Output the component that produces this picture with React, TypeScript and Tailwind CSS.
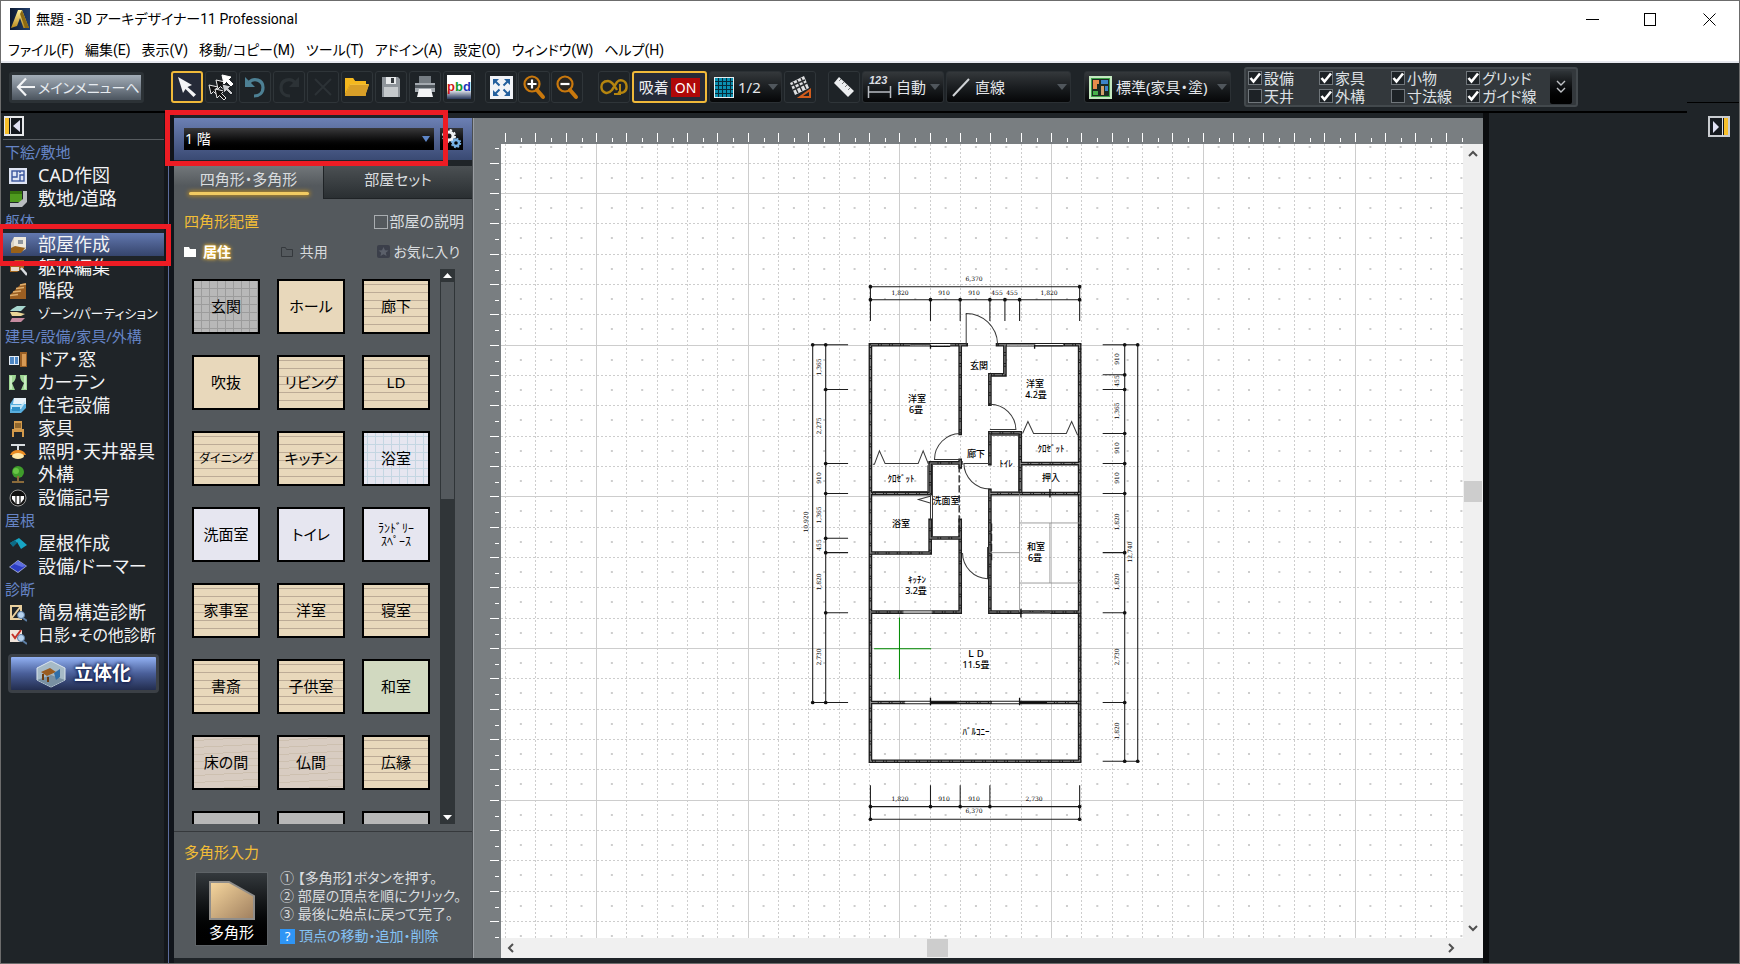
import React from "react";
import type { ReactNode } from "react";

const JP = "font-['Noto_Sans','Noto_Sans_CJK_JP',sans-serif] [font-feature-settings:'palt']";

/* ---------- title bar and menu ---------- */

const MENUS = ["ファイル(F)", "編集(E)", "表示(V)", "移動/コピー(M)", "ツール(T)", "アドイン(A)", "設定(O)", "ウィンドウ(W)", "ヘルプ(H)"];

function TitleBar() {
  return (
    <header className="border-b-2 border-[#e6e8ee] bg-white font-['Roboto','Noto_Sans_CJK_JP',sans-serif] text-black">
      <div className="flex h-9 items-center pl-[9px]">
        <svg width="20" height="22" viewBox="0 0 20 22" aria-hidden="true">
          <defs>
            <linearGradient id="logoBg" x1="0" x2="1"><stop offset="0" stopColor="#0c1a30" /><stop offset="1" stopColor="#23406e" /></linearGradient>
            <linearGradient id="logoA" x1="0" x2="0" y1="0" y2="1"><stop offset="0" stopColor="#fff3a0" /><stop offset="1" stopColor="#b98a1c" /></linearGradient>
          </defs>
          <rect width="20" height="22" fill="url(#logoBg)" />
          <path d="M1 20 L8 2 H12 L19 20 H13.5 L10 10 L7 18 Z" fill="url(#logoA)" />
          <path d="M12 2 L19 20 H15 L10 6 Z" fill="#8d6a12" />
        </svg>
        <h1 className="ml-1.5 flex-1 whitespace-nowrap text-[14px]">無題 - 3D アーキデザイナー11 Professional</h1>
        <div className="flex">
          <button aria-label="最小化" className="grid h-9 w-[58px] place-items-center"><svg width="13" height="13" viewBox="0 0 13 13"><path d="M0 6.5H13" stroke="#000" /></svg></button>
          <button aria-label="最大化" className="grid h-9 w-[58px] place-items-center"><svg width="13" height="13" viewBox="0 0 13 13"><rect x=".5" y=".5" width="11" height="12" fill="none" stroke="#000" /></svg></button>
          <button aria-label="閉じる" className="grid h-9 w-[60px] place-items-center"><svg width="13" height="13" viewBox="0 0 13 13"><path d="M.5 .5 12.5 12.5M12.5 .5 .5 12.5" stroke="#000" /></svg></button>
        </div>
      </div>
      <nav className="flex h-6 items-center gap-[11px] pl-[7px] pt-0.5">
        {MENUS.map((m) => (
          <button key={m} className="whitespace-nowrap text-[14px] leading-[22px]">{m}</button>
        ))}
      </nav>
    </header>
  );
}

/* ---------- toolbar ---------- */

function Tool({ label, active, children }: { label: string; active?: boolean; children: ReactNode }) {
  return (
    <button
      aria-label={label}
      className={
        "grid h-8 w-8 shrink-0 place-items-center rounded-[3px] " +
        (active ? "border-2 border-[#f0b93a] bg-[#252a38]" : "border border-[#2f3539] bg-[#1e2327]")
      }
    >
      {children}
    </button>
  );
}

function Drop({ label, value, className, icon }: { label: string; value: string; className: string; icon: ReactNode }) {
  return (
    <label className={"relative flex h-8 shrink-0 items-center gap-1 rounded-[3px] border border-[#2b3034] bg-gradient-to-b from-[#34383b] via-[#1b1e21] to-[#060708] pl-1 text-[#e4e6ea] " + className}>
      {icon}
      <select aria-label={label} className="min-w-0 flex-1 appearance-none bg-transparent text-[15px] leading-6 outline-none">
        <option>{value}</option>
      </select>
      <svg className="pointer-events-none absolute right-[3px]" width="10" height="6" viewBox="0 0 10 6"><path d="M0 0H10L5 6Z" fill="#50565c" /></svg>
    </label>
  );
}

function Cursor() {
  return <svg width="22" height="22" viewBox="0 0 22 22"><path d="M2 1 L16 9 L11.5 11 L20 18.5 L17.5 21 L9.500 13 L7 17Z" fill="#f4f4f6" /></svg>;
}

function Multi() {
  const d = "M0 0 L9 2 L6.500 4.500 L11 9 L9 11 L4.500 6.500 L2 9Z";
  return (
    <svg width="28" height="28" viewBox="0 0 28 28">
      <path transform="translate(2 12)" d={d} fill="#111" stroke="#e8e8e8" />
      <path transform="translate(8 16)" d={d} fill="#111" stroke="#e8e8e8" />
      <path transform="translate(9 7)" d={d} fill="#111" stroke="#e8e8e8" />
      <path transform="translate(15 11)" d={d} fill="#c9cbce" stroke="#15191c" />
      <path transform="translate(15 2)" d={d} fill="#fff" stroke="#fff" />
    </svg>
  );
}

function Turn({ color, flip }: { color: string; flip?: boolean }) {
  return (
    <svg width="24" height="24" viewBox="0 0 24 24" className={flip ? "-scale-x-100" : ""}>
      <path d="M6 7.500 C11 2 20 5 20 12.500 C20 18 16 21 11 21" fill="none" stroke={color} strokeWidth="3.200" />
      <path d="M2 2 V12 H12Z" fill={color} />
    </svg>
  );
}

function Magnify({ plus }: { plus?: boolean }) {
  return (
    <svg width="24" height="26" viewBox="0 0 24 26">
      <circle cx="10" cy="10" r="7.500" fill="#2a2620" stroke="#c9780d" strokeWidth="2.200" />
      <path d="M15 16 L21 23" stroke="#c9780d" strokeWidth="4" strokeLinecap="round" />
      <path d={plus ? "M5.500 10H14.500M10 5.500V14.500" : "M5.500 10H14.500"} stroke="#fff" strokeWidth="2.200" />
    </svg>
  );
}

function GridIcon() {
  return (
    <svg width="20" height="21" viewBox="0 0 20 21">
      <rect x=".5" y=".5" width="19" height="20" fill="#0a90b0" stroke="#e8eef0" />
      <path d="M4.500 1V20M8.500 1V20M12.500 1V20M16.500 1V20M1 4.500H19M1 8.500H19M1 12.500H19M1 16.500H19" stroke="#062b3a" />
    </svg>
  );
}

const LAYERS: [string, boolean, string, boolean, string][] = [
  ["設備", true, "天井", false, "w-[71px]"],
  ["家具", true, "外構", true, "w-[72px]"],
  ["小物", true, "寸法線", false, "w-[75px]"],
  ["グリッド", true, "ガイド線", true, "w-[84px]"],
];

function Check({ text, on }: { text: string; on: boolean }) {
  return (
    <label className="relative flex h-[18px] items-center gap-0.5 text-[#dfe1e4]">
      <input type="checkbox" defaultChecked={on} className="peer h-[14px] w-[14px] appearance-none border border-[#70767b] bg-[#1d2226]" />
      <svg className="pointer-events-none absolute left-0 hidden peer-checked:block" width="14" height="14" viewBox="0 0 14 14"><path d="M2.500 7 5.500 10.500 12 2.500" fill="none" stroke="#fff" strokeWidth="2.600" /></svg>
      <span className="whitespace-nowrap text-[15px] leading-[18px]">{text}</span>
    </label>
  );
}

function Toolbar() {
  return (
    <div className="flex bg-[#1f2428]">
      <div className="flex h-[50px] min-w-0 flex-1 items-center overflow-hidden border-b-2 border-black pl-2">
        <button className="flex h-[31px] w-[135px] shrink-0 items-center gap-0.5 rounded-[3px] border-[3px] border-[#2c3236] bg-gradient-to-b from-[#a3adb7] via-[#77818c] to-[#4b545e] pl-1 text-[#e6ebf0]">
          <svg width="20" height="20" viewBox="0 0 20 20"><path d="M10 1.500 2 10 10 18.500M2 10H19" fill="none" stroke="#f2f4f6" strokeWidth="2.200" /></svg>
          <span className="whitespace-nowrap text-[14px]">メインメニューへ</span>
        </button>
        <div className="ml-[27px] flex gap-0.5">
          <Tool label="選択" active><Cursor /></Tool>
          <Tool label="複数選択"><Multi /></Tool>
          <Tool label="元に戻す"><Turn color="#4d8094" /></Tool>
          <Tool label="やり直し"><Turn color="#2c3236" flip /></Tool>
          <Tool label="削除"><svg width="20" height="20" viewBox="0 0 20 20"><path d="M2 2 18 18M18 2 2 18" stroke="#2c3236" strokeWidth="2" /></svg></Tool>
          <Tool label="開く">
            <svg width="26" height="22" viewBox="0 0 26 22"><path d="M1 2H9L11 5H22V20H1Z" fill="#c78d12" /><path d="M1 20 6 8H25L21 20Z" fill="#f2bd35" /><path d="M1 2H9L11 5H22V8H6L1 18Z" fill="#f5b81e" /><path d="M1 20 6 9H25L21 20Z" fill="#d99f28" /></svg>
          </Tool>
          <Tool label="保存">
            <svg width="20" height="22" viewBox="0 0 20 22"><path d="M1 1H17L19 3V21H1Z" fill="#8e949a" /><rect x="5" y="1" width="10" height="7" fill="#e7e9eb" /><rect x="10" y="2" width="3" height="5" fill="#33383c" /><rect x="3" y="11" width="14" height="10" fill="#c5c9cc" /></svg>
          </Tool>
          <Tool label="印刷">
            <svg width="24" height="24" viewBox="0 0 24 24"><rect x="6" y="1" width="12" height="7" fill="#757c82" /><path d="M2 8H22V17H2Z" fill="#a4aab0" /><path d="M2 10H22V13H2Z" fill="#52595f" /><path d="M6 14H18L20 22H4Z" fill="#f3f4f5" /></svg>
          </Tool>
          <Tool label="pbd">
            <span className="flex h-6 w-6 items-center justify-center bg-gradient-to-b from-white from-60% to-[#2c3a5c] font-['Liberation_Sans',sans-serif] text-[13px] font-bold leading-6">
              <span className="text-[#d01818]">p</span><span className="text-[#129a2c]">b</span><span className="text-[#1c35b8]">d</span>
            </span>
          </Tool>
        </div>
        <div className="ml-2.5 flex gap-px">
          <Tool label="全体表示">
            <svg width="23" height="23" viewBox="0 0 23 23"><rect width="23" height="23" fill="#f1f3f7" /><path d="M3 3H9L3 9ZM20 3V9L14 3ZM3 20V14L9 20ZM20 20H14L20 14Z" fill="#24609e" /><path d="M5 5 9.500 9.500M18 5 13.500 9.500M5 18 9.500 13.500M18 18 13.500 13.500" stroke="#24609e" strokeWidth="2" /></svg>
          </Tool>
          <Tool label="拡大"><Magnify plus /></Tool>
          <Tool label="縮小"><Magnify /></Tool>
        </div>
        <div className="ml-[15px] flex gap-0.5">
          <Tool label="連続">
            <svg width="28" height="18" viewBox="0 0 28 18"><path d="M8 3C3 3 1 6 1.500 10C2 15 8 17 12 12L17 4C20 1 26 2 26.500 8C27 14 22 16 18 14M8 3C12 3 14 7 17 12" fill="none" stroke="#b5850f" strokeWidth="2.400" /><path d="M20 6V16H14" fill="none" stroke="#b5850f" strokeWidth="2" /></svg>
          </Tool>
          <button className="flex h-8 w-[75px] shrink-0 items-center justify-center gap-0.5 whitespace-nowrap rounded-[3px] border-2 border-[#f0b93a] bg-[#252a38] text-[15px] text-[#edeff3]">
            吸着<span className="bg-[#b00808] px-1 text-[14px] leading-[19px] text-white">ON</span>
          </button>
          <Drop label="グリッド分割" value="1/2" className="w-[73px]" icon={<GridIcon />} />
          <Tool label="グリッド設定">
            <svg width="24" height="24" viewBox="0 0 24 24"><path d="M2 8 16 1 21 13 7 20Z" fill="#dfe0e2" /><path d="M5 7 10 18M9 5 14 16M13 3 18 14M3 11 17 5M5 15 19 8" stroke="#2a2d30" strokeWidth="1.400" /><path d="M12 22H22V15Z" fill="none" stroke="#d25c1c" strokeWidth="2" /></svg>
          </Tool>
        </div>
        <div className="ml-3 flex gap-0.5">
          <Tool label="定規">
            <svg width="24" height="24" viewBox="0 0 24 24"><path d="M7 2 22 16 16 22 2 8Z" fill="#eceef0" /><path d="M9 4 7 6M12 7 10 9M15 10 13 12M18 13 16 15" stroke="#777" /></svg>
          </Tool>
          <Drop label="寸法" value="自動" className="w-[82px]" icon={
            <svg width="25" height="24" viewBox="0 0 25 24"><text x="2" y="9" fill="#dcdee2" className="font-['Liberation_Sans',sans-serif] text-[11px] font-bold italic">123</text><path d="M1.500 11V23M23.500 11V23M2 17H23" stroke="#b8bcc2" strokeWidth="1.500" /></svg>
          } />
          <Drop label="線種" value="直線" className="w-[125px]" icon={<svg width="20" height="22" viewBox="0 0 20 22"><path d="M2 20 18 3" stroke="#d0d3d6" strokeWidth="2" /></svg>} />
        </div>
        <div className="ml-[13px] flex">
          <Drop label="表示テンプレート" value="標準(家具・塗)" className="w-[147px]" icon={
            <svg className="shrink-0" width="23" height="23" viewBox="0 0 23 23"><rect x="1" y="1" width="21" height="21" fill="#1b2a22" stroke="#c4e8c0" strokeWidth="2" /><rect x="2.500" y="2.500" width="18" height="18" fill="none" stroke="#3da347" /><path d="M4 4H10V8H8V13H4Z" fill="#e58c4b" /><rect x="12" y="4" width="7" height="4" fill="#3c84c8" /><rect x="4" y="15" width="5" height="4" fill="#46b04a" /><rect x="12" y="10" width="3" height="9" fill="#cfa06a" /><rect x="16" y="10" width="3" height="5" fill="#3c84c8" /></svg>
          } />
        </div>
        <div className="ml-[13px] flex h-10 shrink-0 items-center rounded-[3px] border-2 border-[#43494d] bg-[#33383c] pl-0.5 pr-1">
          {LAYERS.map(([a, ao, b, bo, w]) => (
            <div key={a} className={w}><Check text={a} on={ao} /><Check text={b} on={bo} /></div>
          ))}
          <button aria-label="その他の表示" className="grid h-[33px] w-[22px] place-items-center rounded-[2px] bg-gradient-to-b from-[#2f3438] to-black">
            <svg width="10" height="14" viewBox="0 0 10 14"><path d="M1 1 5 5 9 1M1 8 5 12 9 8" fill="none" stroke="#c0c3c7" strokeWidth="1.400" /></svg>
          </button>
        </div>
      </div>
      <div className="h-10 w-[52px] shrink-0 border-b border-black" />
    </div>
  );
}

/* ---------- left navigation ---------- */

const ICONS: Record<string, ReactNode> = {
  cad: <><rect width="18" height="16" y="1" fill="#dfe5f4" /><rect x="3" y="4" width="12" height="10" fill="none" stroke="#3a569c" strokeWidth="1.400" /><path d="M8 4V10H3M11 14V8H15M11 4V6" fill="none" stroke="#3a569c" strokeWidth="1.400" /></>,
  site: <><path d="M1 1H13V12H1Z" fill="#4f9a1e" /><path d="M14 1H18V12L13 17H1V13H9L14 9Z" fill="#b9bcc0" /><path d="M1 1H13V4H1Z" fill="#35720f" /></>,
  room: <><path d="M5 1H17V13L12 16H2V7Z" fill="#d9d2c4" /><path d="M5 1H17V11H5Z" fill="#ede8dd" /><rect x="9" y="4" width="5" height="4" fill="#8e959e" /><path d="M2 12 6 10 16 12 12 17H2Z" fill="#9a6118" /></>,
  edit: <><path d="M1 6 6 1H15V9L8 13H1Z" fill="#a3661f" /><path d="M2 8H10V12H2Z" fill="#e7dccb" /><path d="M12 9 18 16" stroke="#d9dce0" strokeWidth="2.500" /></>,
  stairs: <><path d="M1 17V13L4 10 8 6 12 2 17 1V17Z" fill="#9c5f22" /><path d="M1 13.500 9 12.500M4 10 12 9M7 6.500 15 5.500M11 3 17 2" stroke="#e0b070" strokeWidth="1.500" /></>,
  zone: <><path d="M3 4 8 1H17L12 6H1Z" fill="#a7d7cf" /><path d="M1 7 8 7 16 9 12 11H3Z" fill="#e9d597" /><path d="M3 13H16L12 17H1Z" fill="#c78ba0" /></>,
  door: <><rect y="5" width="10" height="9" fill="#e3ecf5" /><path d="M1 6H5V13H1ZM6 6H9V13H6Z" fill="#4e87c4" /><rect x="11" y="1" width="7" height="15" fill="#9a5f24" /><rect x="13" y="3" width="4" height="12" fill="#d79a55" /></>,
  curtain: <><path d="M0 1H7Q7 7 3 9L6 16H0ZM18 1H11Q11 7 15 9L12 16H18Z" fill="#9fd694" /><path d="M2 2V15M16 2V15" stroke="#d8f3cf" strokeWidth="1.500" /></>,
  bath: <><path d="M5 1H17V11L12 16H1V7Z" fill="#58aede" /><path d="M5 1H17V7H4Z" fill="#e8f2f9" /><path d="M2 8H12L16 4V6L12 12H2Z" fill="#bfe3f5" /><path d="M3 10H11V14H3Z" fill="#2f90c8" /></>,
  chair: <><path d="M5 1H13V9H5ZM3 9H15V12H3ZM3 12H5V17H3ZM13 12H15V17H13Z" fill="#d39a4b" /><path d="M7 3V8M9 3V8M11 3V8" stroke="#4d3413" /></>,
  lamp: <><path d="M2 1H16V3H2ZM8 3H10V7H8Z" fill="#d8dde0" /><path d="M1 12Q3 7 9 7T17 12Z" fill="#e98c23" /><ellipse cx="9" cy="13" rx="6" ry="3" fill="#ffe9a6" /></>,
  tree: <><circle cx="9" cy="6" r="6" fill="#3f9c2b" /><circle cx="7" cy="5" r="3" fill="#68c646" /><path d="M8 10H10V15H15V17H3V15H8Z" fill="#8b6b3b" /></>,
  symbol: <><circle cx="9" cy="9" r="8" fill="#111" stroke="#9a9a9a" /><path d="M3 7H15V10L11 15H7L3 10Z" fill="#fff" /><path d="M7 7V15M11 7V15" stroke="#111" strokeWidth="1.200" /></>,
  roof: <><path d="M1 8 10 3 18 10 12 14 8 7 4 11Z" fill="#17a5c4" /><path d="M1 8 6 5 8 8 4 12Z" fill="#0c6b86" /></>,
  dormer: <><path d="M9 2 18 8 9 15 0 9Z" fill="#a9b2dc" /><path d="M9 3 17 8 9 14 1 9Z" fill="#2c3ec4" /><path d="M9 3 17 8 13 9 5 6Z" fill="#5f6fe0" /></>,
  frame: <><path d="M2 2H12V15H2ZM12 2 2 15" fill="none" stroke="#e9cf9d" strokeWidth="2" /><circle cx="12" cy="11" r="3.500" fill="#b7d3ee" stroke="#5c7ea5" /><path d="M14 14 18 17" stroke="#5c7ea5" strokeWidth="2" /></>,
  shadow: <><rect x="1" y="3" width="12" height="12" fill="#f0e4da" /><path d="M3 7 6 11 12 3" fill="none" stroke="#c33127" strokeWidth="2" /><circle cx="12" cy="11" r="3.500" fill="#b7d3ee" stroke="#5c7ea5" /><path d="M14 14 18 17" stroke="#5c7ea5" strokeWidth="2" /></>,
};

const NAV: { text: string; icon?: string; size?: string }[] = [
  { text: "下絵/敷地" },
  { text: "CAD作図", icon: "cad" },
  { text: "敷地/道路", icon: "site" },
  { text: "躯体" },
  { text: "部屋作成", icon: "room" },
  { text: "躯体編集", icon: "edit" },
  { text: "階段", icon: "stairs" },
  { text: "ゾーン/パーティション", icon: "zone", size: "text-[13px]" },
  { text: "建具/設備/家具/外構" },
  { text: "ドア・窓", icon: "door" },
  { text: "カーテン", icon: "curtain" },
  { text: "住宅設備", icon: "bath" },
  { text: "家具", icon: "chair" },
  { text: "照明・天井器具", icon: "lamp" },
  { text: "外構", icon: "tree" },
  { text: "設備記号", icon: "symbol" },
  { text: "屋根" },
  { text: "屋根作成", icon: "roof" },
  { text: "設備/ドーマー", icon: "dormer" },
  { text: "診断" },
  { text: "簡易構造診断", icon: "frame" },
  { text: "日影・その他診断", icon: "shadow", size: "text-[16px]" },
];

function Sidebar() {
  return (
    <aside className="w-[163px] shrink-0 pl-0.5">
      <div className="flex h-[27px] items-center border-b border-[#565b5f] pl-px">
        <button aria-label="メニューを閉じる">
          <svg width="20" height="20" viewBox="0 0 20 20"><rect x="1" y="1" width="18" height="18" fill="#15191e" stroke="#e6e8ea" strokeWidth="2" /><rect x="1" y="2" width="4" height="16" fill="#f8bf2a" /><path d="M16 4V16L9 10Z" fill="#dfe0f2" /><path d="M6.500 1V19" stroke="#dfe0e4" /></svg>
        </button>
      </div>
      <ul className="pt-px">
        {NAV.map((n) =>
          n.icon ? (
            <li key={n.text} className="relative">
              <a
                href="#"
                className={
                  "flex h-[23px] items-center gap-[11px] whitespace-nowrap pl-1.5 leading-[23px] text-[#f2f3f5] " +
                  (n.size ?? "text-[18px]") +
                  (n.text === "部屋作成" ? " bg-gradient-to-b from-[#6278b0] to-[#36456c]" : "")
                }
              >
                <svg className="shrink-0" width="18" height="18" viewBox="0 0 18 18" aria-hidden="true">{ICONS[n.icon]}</svg>
                {n.text}
              </a>
              {n.text === "部屋作成" && <span className="pointer-events-none absolute -left-[3px] -top-[9px] z-20 h-[42px] w-[171px] border-[5px] border-l-[3px] border-[#ed1c24]" />}
            </li>
          ) : (
            <li key={n.text} className="h-[23px] whitespace-nowrap pl-0.5 text-[15px] leading-[23px] text-[#6684c6]">{n.text}</li>
          ),
        )}
      </ul>
      <button className="ml-[5px] mt-[7px] flex h-[39px] w-[151px] items-center justify-center gap-2 rounded-[4px] border-[3px] border-[#3b4046] bg-gradient-to-b from-[#93b2f4] via-[#4a5f99] to-[#232e50] text-[19px] font-bold text-white [text-shadow:0_0_4px_#0a1440,0_0_3px_#0a1440]">
        <svg width="30" height="28" viewBox="0 0 30 28"><path d="M15 1 29 8V20L15 27 1 20V8Z" fill="#a6bac6" stroke="#dce6ee" /><path d="M1 20 15 15 29 20 15 27Z" fill="#7990a2" /><path d="M5 12 14 8 20 12 11 16Z" fill="#9a5c20" /><path d="M7 14V20M12 17V22" stroke="#6d3c10" strokeWidth="2" /><path d="M18 13 24 9V17L20 20Z" fill="#2f6ea8" /></svg>
        立体化
      </button>
    </aside>
  );
}

/* ---------- room panel ---------- */

type Tex = "tile" | "plain" | "wood" | "bath" | "white" | "tatami" | "grain";

const TEX: Record<Tex, string> = {
  tile: "bg-[#b8b8b8] [background-image:repeating-linear-gradient(90deg,transparent_0_7px,#9c9c9c_7px_8px),repeating-linear-gradient(transparent_0_7px,#9c9c9c_7px_8px)]",
  plain: "bg-[#e8d8bb]",
  wood: "bg-[#e8d8bb] [background-image:repeating-linear-gradient(transparent_0_3px,#bcab96_3px_4px,transparent_4px_8px)]",
  bath: "bg-[#e6e6f0] [background-image:repeating-linear-gradient(90deg,transparent_0_3px,#c4d6e2_3px_4px,transparent_4px_8px),repeating-linear-gradient(transparent_0_3px,#c4d6e2_3px_4px,transparent_4px_8px)]",
  white: "bg-[#e6e6f0]",
  tatami: "bg-[#d1d9c0]",
  grain: "bg-[#d8ccc1] [background-image:repeating-linear-gradient(177deg,transparent_0_3px,#cdc0b0_3px_4px,transparent_4px_7px)]",
};

const ROOMS: [string, Tex][] = [
  ["玄関", "tile"], ["ホール", "plain"], ["廊下", "wood"],
  ["吹抜", "plain"], ["リビング", "wood"], ["LD", "wood"],
  ["ダイニング", "wood"], ["キッチン", "wood"], ["浴室", "bath"],
  ["洗面室", "white"], ["トイレ", "white"], ["ﾗﾝﾄﾞﾘｰ\nｽﾍﾟｰｽ", "white"],
  ["家事室", "wood"], ["洋室", "wood"], ["寝室", "wood"],
  ["書斎", "wood"], ["子供室", "wood"], ["和室", "tatami"],
  ["床の間", "grain"], ["仏間", "grain"], ["広縁", "wood"],
];

function RoomPanel() {
  return (
    <section className="flex w-[298px] shrink-0 flex-col bg-[#54595d] text-[15px] text-[#d9dcdf]">
      <div className="relative flex h-[42px] items-center gap-1.5 bg-gradient-to-b from-[#6c80b4] to-[#3a4a73] pl-2.5">
        <label className="relative flex h-[22px] w-[250px] items-center bg-gradient-to-b from-[#3a3a3c] to-black">
          <select aria-label="階" className="w-full appearance-none bg-transparent px-px text-[14px] leading-[22px] text-white outline-none"><option>1 階</option></select>
          <svg className="pointer-events-none absolute right-1" width="8" height="6" viewBox="0 0 8 6"><path d="M0 0H8L4 6Z" fill="#5e86c8" /></svg>
        </label>
        <button aria-label="階の設定" className="grid h-[22px] w-[23px] place-items-center bg-gradient-to-b from-[#34363a] to-black">
          <svg width="20" height="20" viewBox="0 0 20 20"><circle cx="7" cy="7" r="4" fill="none" stroke="#f0f2f4" strokeWidth="3" /><circle cx="7" cy="7" r="6" fill="none" stroke="#f0f2f4" strokeWidth="2" strokeDasharray="2.400 2.310" /><circle cx="14" cy="14" r="3" fill="none" stroke="#76b0e4" strokeWidth="2.400" /><circle cx="14" cy="14" r="4.500" fill="none" stroke="#76b0e4" strokeWidth="1.500" strokeDasharray="1.800 1.730" /></svg>
        </button>
        <span className="pointer-events-none absolute -left-[9px] -top-2 z-20 h-14 w-[283px] border-[5px] border-[#ed1c24]" />
      </div>
      <div role="tablist" className="grid h-[39px] grid-cols-2 border-t-[6px] border-[#1f2428]">
        <button role="tab" aria-selected="true" className="flex flex-col items-center bg-gradient-to-b from-[#72777a] to-[#54595d] to-60%">
          <span className="leading-[26px]">四角形・多角形</span>
          <span className="h-[3px] w-[120px] rounded bg-[#f2cb62] shadow-[0_0_4px_1px_#b98a24]" />
        </button>
        <button role="tab" aria-selected="false" className="border-b border-l border-[#1f2326] bg-gradient-to-b from-[#4b5053] to-[#2a2f32] pb-1.5 leading-[26px]">部屋セット</button>
      </div>
      <div className="flex items-center justify-between pl-2.5 pr-2 pt-[11px]">
        <h2 className="leading-[23px] text-[#f2bd37]">四角形配置</h2>
        <label className="flex items-center gap-0.5 leading-[23px]">
          <input type="checkbox" className="h-[14px] w-[14px] appearance-none border border-[#a9adb0]" />部屋の説明
        </label>
      </div>
      <div className="flex h-9 items-center justify-between pl-2.5 pr-3 text-[14px]">
        <button className="flex w-[96px] items-center gap-[7px] font-bold text-white [text-shadow:0_0_3px_#f4b92b,0_0_4px_#f4b92b]">
          <svg width="12" height="11" viewBox="0 0 12 11"><path d="M0 1H5L6 3H12V11H0Z" fill="#fff" /></svg>居住
        </button>
        <button className="flex w-[96px] items-center gap-[7px]">
          <svg width="12" height="11" viewBox="0 0 12 11"><path d="M.5 1.500H4.500L5.500 3.500H11.500V10.500H.5Z" fill="none" stroke="#35393d" /></svg>共用
        </button>
        <button className="flex items-center gap-[3px] whitespace-nowrap">
          <svg width="13" height="13" viewBox="0 0 13 13"><rect width="13" height="13" rx="2" fill="#3b3f4a" /><path d="M6.500 2 8 5.200 11.500 5.500 8.800 7.700 9.600 11 6.500 9.200 3.400 11 4.200 7.700 1.500 5.500 5 5.200Z" fill="#5b606a" /></svg>お気に入り
        </button>
      </div>
      <div className="flex h-[555px] justify-between overflow-hidden pl-[18px] pr-[17px]">
        <div className="grid grid-cols-[68px_68px_68px] content-start gap-x-[17px] gap-y-[21px] pt-2.5">
          {ROOMS.map(([name, tex]) => (
            <button key={name} className={"h-[55px] whitespace-pre border-2 border-black text-black " + (name.includes("\n") ? "text-[12px] leading-[13px] " : name === "ダイニング" ? "text-[12px] " : "text-[15px] ") + TEX[tex]}>{name}</button>
          ))}
          {["a", "b", "c"].map((k) => <button key={k} aria-label="部屋" className="h-[55px] border-2 border-black bg-[#b8b8b8]" />)}
        </div>
        <div className="flex w-[15px] flex-col items-center bg-[#303538]">
          <svg className="my-1" width="9" height="5" viewBox="0 0 9 5"><path d="M0 5H9L4.500 0Z" fill="#fff" /></svg>
          <div className="h-[217px] w-[13px] bg-[#54595d]" />
          <svg className="mb-1 mt-auto" width="9" height="5" viewBox="0 0 9 5"><path d="M0 0H9L4.500 5Z" fill="#fff" /></svg>
        </div>
      </div>
      <div className="mt-[7px] flex-1 border-t border-[#36393c] pl-2.5 pt-[9px]">
        <h2 className="leading-[22px] text-[#f2bd37]">多角形入力</h2>
        <div className="flex items-center gap-3 pl-[11px] pt-1.5">
          <button className="flex h-[74px] w-[73px] shrink-0 flex-col items-center justify-end border border-[#5e6367] bg-gradient-to-b from-[#34393d] to-black text-white">
            <svg width="46" height="39" viewBox="0 0 46 39">
              <defs><linearGradient id="poly" x1="0" y1="0" x2="1" y2="1"><stop offset="0" stopColor="#f7d79e" /><stop offset="1" stopColor="#9f7f5f" /></linearGradient></defs>
              <path d="M1 1H20L45 15V38H1Z" fill="url(#poly)" stroke="#8f8d8a" strokeWidth="2" />
            </svg>
            <span className="leading-[25px]">多角形</span>
          </button>
          <div className="whitespace-nowrap text-[14px]">
            <ol className="leading-[18px]">
              <li>① 【多角形】ボタンを押す。</li>
              <li>② 部屋の頂点を順にクリック。</li>
              <li>③ 最後に始点に戻って完了。</li>
            </ol>
            <a href="#" className="flex items-center gap-1 leading-[26px] text-[#84c2f5]">
              <span className="grid h-[15px] w-[15px] place-items-center bg-[#2f95f5] text-[13px] leading-[15px] text-white">?</span>頂点の移動・追加・削除
            </a>
          </div>
        </div>
      </div>
    </section>
  );
}

/* ---------- drawing area ---------- */

const STEP = 30.34;
const range = (n: number, from = 0) => Array.from({ length: n }, (_, i) => i + from);
/* Grid line positions, measured from the drawing's own corner. */
const gx = (i: number) => Math.round(95 + i * STEP) + 0.5;
const gy = (j: number) => Math.round(49 + j * STEP) + 0.5;

function RulerTop() {
  return (
    <div className="h-[26px] shrink-0 pl-[27px] pr-5">
      <svg className="block h-full w-full" aria-hidden="true">
        {range(80, -3).map((i) => (
          <g key={i} stroke="#fff">
            <path d={`M${gx(i)} 15V24`} />
            <path d={`M${Math.round(gx(i) + 15) + 0.5} 20V24`} />
          </g>
        ))}
      </svg>
    </div>
  );
}

function RulerLeft() {
  return (
    <div className="w-[27px] shrink-0 pb-5">
      <svg className="block h-full w-full" aria-hidden="true">
        {range(50, -2).map((j) => (
          <g key={j} stroke="#fff">
            <path d={`M16 ${gy(j)}H25`} />
            <path d={`M21 ${Math.round(gy(j) + 15) + 0.5}H25`} />
          </g>
        ))}
      </svg>
    </div>
  );
}

/* Walls, in thirds of a pixel. */
const WALLS =
  "M528 254H241V1502H868V254H622 M510 254V520 M644 254V344H599V432 M599 610V518H690V700 M690 610H868 M599 700H868 M599 690V1055H868 M420 610V700H241 M420 608H512 M510 600V620 M510 780V1055H241 M420 780V878H241 M420 833H510 M241 1326H868";
const THIN =
  "M528 254V160A94 94 0 0 1 622 250 M599 432A78 78 0 0 1 677 508H599 M510 520A78 78 0 0 0 433 598H510 M599 610H521A78 78 0 0 0 599 686 M517 878A78 78 0 0 0 592 955V860 M248 612H253L268 572 285 610H384L399 572 415 612 M697 520 713 484 730 520H828L844 484 862 525 M420 708 385 718 420 728 M421 700V780 M427 612V830 M604 525H685V695H604 M695 615V695 M247 694H413V615";
const TATAMI = "M688 700V1055 M688 788H868 M779 788V968 M688 968H868 M599 877H688";
const DIMS =
  "M241 80H868 M241 119H868 M241 80V183 M421 119V183 M510 119V183 M599 119V183 M644 119V183 M688 119V183 M868 80V183" +
  "M241 1574V1676H868V1574 M241 1638H868 M421 1574V1638 M510 1574V1638 M599 1574V1638" +
  "M174 254H68V1326H174 M107 254V1326 M107 388H174 M107 610H174 M107 700H174 M107 834H174 M107 877H174 M107 1057H174" +
  "M937 254H1042V1502H937 M1003 254V1502 M937 344H1003 M937 388H1003 M937 520H1003 M937 610H1003 M937 700H1003 M937 877H1003 M937 1057H1003 M937 1326H1003";
const NODES: [number, number][] = [
  [241, 80], [868, 80], [241, 119], [421, 119], [510, 119], [599, 119], [644, 119], [688, 119], [868, 119],
  [241, 1638], [421, 1638], [510, 1638], [599, 1638], [868, 1638], [241, 1676], [868, 1676],
  [68, 254], [107, 254], [107, 388], [107, 610], [107, 700], [107, 834], [107, 877], [107, 1057], [107, 1326], [68, 1326],
  [1003, 254], [1042, 254], [1003, 344], [1003, 388], [1003, 520], [1003, 610], [1003, 700], [1003, 877], [1003, 1057], [1003, 1326], [1003, 1502], [1042, 1502],
];

const NAMES: [string, number, number][] = [
  ["玄関", 189, 109], ["洋室", 245, 127], ["4.2畳", 246, 138], ["洋室", 127, 142], ["6畳", 126, 153],
  ["廊下", 186, 197], ["ｸﾛｾﾞｯﾄ", 261, 192], ["ﾄｲﾚ", 216, 207], ["ｸﾛｾﾞｯﾄ", 111, 222], ["押入", 261, 221],
  ["洗面室", 156, 244], ["浴室", 111, 267], ["和室", 246, 290], ["6畳", 245, 301], ["ｷｯﾁﾝ", 127, 323],
  ["3.2畳", 126, 334], ["Ｌ Ｄ", 186, 397], ["11.5畳", 186, 408], ["ﾊﾞﾙｺﾆｰ", 186, 475],
];
const H_DIMS: [string, number, number][] = [
  ["6,370", 184, 21], ["1,820", 110, 35], ["910", 154, 35], ["910", 184, 35], ["455", 207, 35], ["455", 222, 35], ["1,820", 259, 35],
  ["1,820", 110, 541], ["910", 154, 541], ["910", 184, 541], ["2,730", 244, 541], ["6,370", 184, 553],
];
const V_DIMS: [string, number, number][] = [
  ["1,365", 31, 107], ["2,275", 31, 166], ["910", 31, 218], ["1,365", 31, 255], ["455", 31, 285], ["1,820", 31, 322], ["2,730", 31, 397], ["10,920", 18, 262],
  ["910", 329, 99], ["455", 329, 121], ["1,365", 329, 151], ["910", 329, 188], ["910", 329, 218], ["1,820", 329, 262], ["1,820", 329, 322], ["2,730", 329, 397], ["1,820", 329, 471], ["12,740", 342, 292],
];

function Plan() {
  return (
    <svg className="block h-full w-full" role="img" aria-label="間取り図">
      {range(80, -4).map((i) => (
        <line key={i} x1={gx(i)} x2={gx(i)} y1="0" y2="2000" stroke="#cdcdcd" strokeDasharray={i % 5 ? "2 2" : undefined} />
      ))}
      {range(50, -2).map((j) => (
        <line key={j} x1="0" x2="3000" y1={gy(j)} y2={gy(j)} stroke="#cdcdcd" strokeDasharray={j % 5 ? "2 2" : undefined} />
      ))}
      {range(50, -2).map((j) => (
        <line key={j} x1={gx(-4) + 14} x2="3000" y1={gy(j) + 14.5} y2={gy(j) + 14.5} stroke="#cdcdcd" strokeWidth="2" strokeDasharray="2 28.34" />
      ))}
      <g transform="translate(289 116)">
        <g transform="scale(.3337)" fill="none">
          <path d={WALLS} stroke="#1c1c1c" strokeWidth="11" strokeLinecap="square" />
          <path d={WALLS} stroke="#8c8c8c" strokeWidth="3" strokeDasharray="22 3 5 3" />
          <path d="M360 254H480M650 254H818M345 1326H421M605 1326H688M697 1057H780" stroke="#fff" strokeWidth="5" />
          <path d="M340 1055H425" stroke="#aaa" strokeWidth="8" />
          <path d="M360 254H421M421 259H480M650 252H735M733 257H818M421 1326H500M688 1326H770M697 1057H780" stroke="#111" strokeWidth="3" />
          <path d="M421 254V266M733 254V266M421 1312V1334M688 1312V1334M692 1045V1071M779 686V712" stroke="#111" strokeWidth="4" />
          <path d={THIN} stroke="#3a3a3a" strokeWidth="3" />
          <path d="M507 615V830M604 790V900" stroke="#222" strokeWidth="4" strokeDasharray="22 8" />
          <path d={TATAMI} stroke="#8a8a8a" strokeWidth="2.500" />
          <path d={DIMS} stroke="#1d1d1d" strokeWidth="3.200" />
          {NODES.map(([x, y]) => <circle key={`${x}-${y}`} cx={x} cy={y} r="5.500" fill="#111" />)}
          <path d="M252 1165H423M328 1071V1256" stroke="#008a00" strokeWidth="3" />
        </g>
        <g textAnchor="middle" fill="#000" className="text-[9px] font-medium leading-none">
          {NAMES.map(([t, x, y], i) => <text key={i} x={x} y={y}>{t}</text>)}
        </g>
        <g textAnchor="middle" fill="#000" className="font-['DejaVu_Serif',serif] text-[6px]">
          {H_DIMS.map(([t, x, y], i) => <text key={i} x={x} y={y}>{t}</text>)}
          {V_DIMS.map(([t, x, y], i) => <text key={i} transform={`translate(${x} ${y}) rotate(-90)`}>{t}</text>)}
        </g>
      </g>
    </svg>
  );
}

function Arrow({ label, d }: { label: string; d: string }) {
  return (
    <button aria-label={label} className="grid h-5 w-5 place-items-center">
      <svg width="10" height="10" viewBox="0 0 10 10"><path d={d} fill="none" stroke="#505050" strokeWidth="2" /></svg>
    </button>
  );
}

function Canvas() {
  return (
    <main className="flex min-w-0 flex-1 flex-col bg-[#797e81]">
      <RulerTop />
      <div className="flex min-h-0 flex-1">
        <RulerLeft />
        <div className="flex min-w-0 flex-1 flex-col bg-white">
          <div className="flex min-h-0 flex-1">
            <div className="min-w-0 flex-1 overflow-hidden"><Plan /></div>
            <div className="flex w-5 flex-col items-center justify-between bg-[#f0f0f0]">
              <Arrow label="上へ" d="M1 7 5 3 9 7" />
              <div className="mb-[100px] h-[21px] w-[18px] bg-[#cdcdcd]" />
              <Arrow label="下へ" d="M1 3 5 7 9 3" />
            </div>
          </div>
          <div className="flex h-5 items-center justify-between bg-[#f0f0f0] pr-[22px]">
            <Arrow label="左へ" d="M7 1 3 5 7 9" />
            <div className="mr-[88px] h-[18px] w-[21px] bg-[#cdcdcd]" />
            <Arrow label="右へ" d="M3 1 7 5 3 9" />
          </div>
        </div>
      </div>
    </main>
  );
}

export default function App() {
  return (
    <div className={"flex min-h-screen flex-col border border-[#6c6c6c] bg-[#1f2428] " + JP}>
      <TitleBar />
      <Toolbar />
      <div className="flex flex-1 items-stretch">
        <Sidebar />
        <div className="w-[10px] shrink-0 border-l-4 border-[#14181c] bg-[#11151b]"><div className="h-full w-px bg-[#5b6c9c]" /></div>
        <div className="flex min-w-0 flex-1 pb-[5px] pt-[5px]">
          <RoomPanel />
          <div className="w-0.5 shrink-0 border-r border-[#9a9ea2] bg-[#4a4e52]" />
          <Canvas />
        </div>
        <div className="w-1.5 shrink-0 bg-[#0b0d0f]" />
        <aside className="flex w-[250px] shrink-0 items-start justify-end pr-[9px] pt-[3px]">
          <button aria-label="パネルを開く">
            <svg width="22" height="21" viewBox="0 0 22 21"><rect x="1" y="1" width="20" height="19" fill="#15191e" stroke="#c9ccd0" strokeWidth="2" /><rect x="16" y="2" width="4" height="17" fill="#f8bf2a" /><path d="M5 5V17L11 11Z" fill="#dfe0f2" /><path d="M14.500 1V20" stroke="#dfe0e4" /></svg>
          </button>
        </aside>
      </div>
    </div>
  );
}
